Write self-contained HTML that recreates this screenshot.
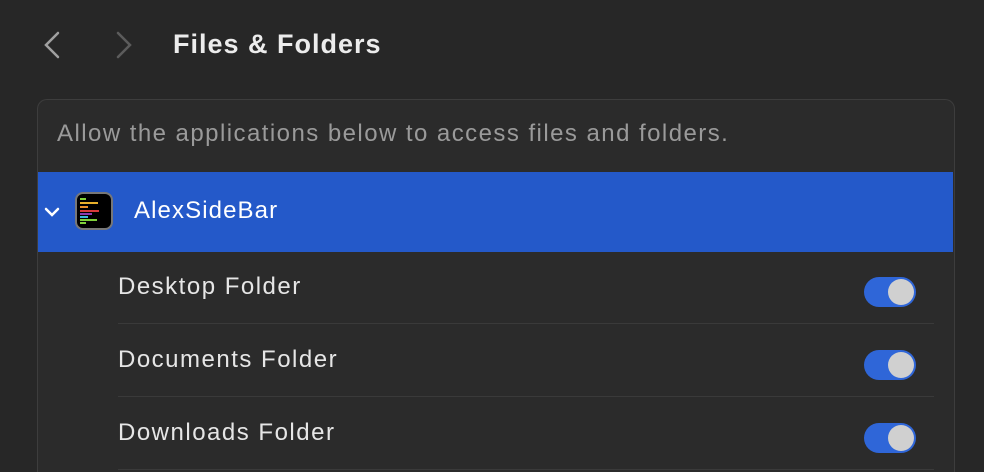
<!DOCTYPE html>
<html style="margin:0;width:984px;height:472px;overflow:hidden"><head><style>
body{margin:0;width:984px;height:472px;background:#272727;overflow:hidden;font-family:"Liberation Sans",sans-serif;position:relative}
.abs{position:absolute}
.panel{left:37px;top:99px;width:916px;height:373px;border:1px solid #3d3d3d;border-bottom:none;border-radius:10px 10px 0 0;background:#2b2b2b;overflow:hidden}
.sep{height:1px;background:#3a3a3a;left:118px;width:816px}
.lbl{color:#e6e6e6;font-size:24px;letter-spacing:1.5px;left:118px}
.tog{left:864px;width:52px;height:30px;border-radius:15px;background:#2f66d8}
.tog::after{content:"";position:absolute;right:2px;top:2px;width:26px;height:26px;border-radius:13px;background:#d0d0d0}
</style></head><body>
<svg class="abs" style="left:40px;top:30px" width="24" height="30"><path d="M18 3 L6 15 L18 27" stroke="#a0a0a0" stroke-width="2.5" fill="none" stroke-linecap="round"/></svg>
<svg class="abs" style="left:112px;top:30px" width="24" height="30"><path d="M6 3 L18 15 L6 27" stroke="#5c5c5c" stroke-width="2.5" fill="none" stroke-linecap="round"/></svg>
<div class="abs" style="left:173px;top:29px;color:#ececec;font-size:27px;font-weight:bold;letter-spacing:1px">Files &amp; Folders</div>
<div class="abs panel"></div>
<div class="abs" style="left:57px;top:120px;color:#9a9a9a;font-size:24px;letter-spacing:1.45px">Allow the applications below to access files and folders.</div>
<div class="abs" style="left:38px;top:172px;width:915px;height:80px;background:#2459c9"></div>
<svg class="abs" style="left:43px;top:205px" width="18" height="14"><path d="M3 4 L9 10 L15 4" stroke="#fff" stroke-width="2.5" fill="none" stroke-linecap="round"/></svg>
<div class="abs" style="left:75px;top:192px;width:38px;height:38px;border-radius:8px;background:#000;border:2px solid #777;box-sizing:border-box"></div>
<svg class="abs" style="left:75px;top:192px" width="38" height="38">
<rect x="5" y="6" width="6" height="2" fill="#7fd13b"/><rect x="5" y="10" width="18" height="2" fill="#e8b02b"/><rect x="5" y="14" width="8" height="2" fill="#e8902b"/><rect x="5" y="18" width="19" height="2" fill="#d83b3b"/><rect x="5" y="21" width="12" height="2" fill="#8b3bb0"/><rect x="5" y="24" width="8" height="2" fill="#3bb8d8"/><rect x="5" y="27" width="17" height="2" fill="#7fd13b"/><rect x="5" y="30" width="6" height="2" fill="#7fd13b"/></svg>
<div class="abs" style="left:134px;top:197px;color:#fff;font-size:24px;letter-spacing:1.1px">AlexSideBar</div>
<div class="abs lbl" style="top:273px">Desktop Folder</div>
<div class="abs tog" style="top:277px"></div>
<div class="abs sep" style="top:323px"></div>
<div class="abs lbl" style="top:346px">Documents Folder</div>
<div class="abs tog" style="top:350px"></div>
<div class="abs sep" style="top:396px"></div>
<div class="abs lbl" style="top:419px">Downloads Folder</div>
<div class="abs tog" style="top:423px"></div>
<div class="abs sep" style="top:469px"></div>
</body></html>
